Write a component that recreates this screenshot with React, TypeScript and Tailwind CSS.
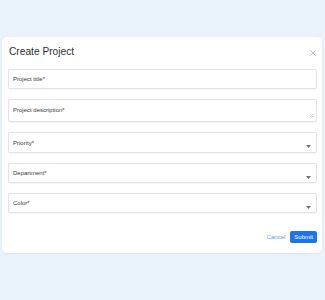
import React from 'react';

function Field({ label, select, area, tall }: { label: string; select?: boolean; area?: boolean; tall?: boolean }) {
  return (
    <div
      className={`relative flex rounded-[2px] border border-[#e3e3e3] bg-white px-[4px] shadow-[0_1px_1px_rgba(0,0,0,0.04)] ${
        area ? 'h-[23px] items-start pt-[6px]' : tall ? 'h-[21px] items-center' : 'h-[20px] items-center'
      }`}
    >
      <span className="text-[6px] leading-[8px] text-[#3a3a3a]">{label}</span>
      {select && (
        <svg className="absolute right-[5px] top-[12px]" width="5" height="3" viewBox="0 0 5 3">
          <path d="M0 0h5L2.5 3z" fill="#707070" />
        </svg>
      )}
      {area && (
        <svg className="absolute bottom-[3px] right-[3px]" width="4" height="4" viewBox="0 0 4 4">
          <path d="M4 0L0 4M4 2L2 4" stroke="#b0b0b0" strokeWidth="0.6" />
        </svg>
      )}
    </div>
  );
}

export default function App() {
  return (
    <div className="min-h-[300px] bg-[#eaf3fc] pt-[37px] pl-[2px]" style={{ fontFamily: '"Liberation Sans", Arial, sans-serif' }}>
      <div className="flex w-[320px] flex-col rounded-[5px] bg-white pl-[6px] pr-[5px] pt-[9px] pb-[10px] shadow-[0_1px_3px_rgba(0,0,0,0.06)]">
        <div className="flex h-[12px] items-center justify-between pl-[1px]">
          <h2 className="text-[10.2px] leading-[12px] text-[#2f2f2f]">Create Project</h2>
          <svg className="mr-[1px] mt-[1px]" width="6" height="6" viewBox="0 0 6 6">
            <path d="M0.5 0.5l5 5M5.5 0.5l-5 5" stroke="#b8b8b8" strokeWidth="0.9" />
          </svg>
        </div>
        <div className="mt-[11px] flex flex-col gap-[10px]">
          <Field label="Project title*" />
          <Field label="Project description*" area />
          <Field label="Priority*" select tall />
          <Field label="Department*" select />
          <Field label="Color*" select />
        </div>
        <div className="mt-[18px] flex items-center justify-end gap-[5px]">
          <button className="text-[6px] leading-[8px] text-[#5a98f0]">Cancel</button>
          <button className="h-[12px] rounded-[2px] bg-[#1f74ea] px-[4px] text-[6px] leading-[12px] text-white">Submit</button>
        </div>
      </div>
    </div>
  );
}
